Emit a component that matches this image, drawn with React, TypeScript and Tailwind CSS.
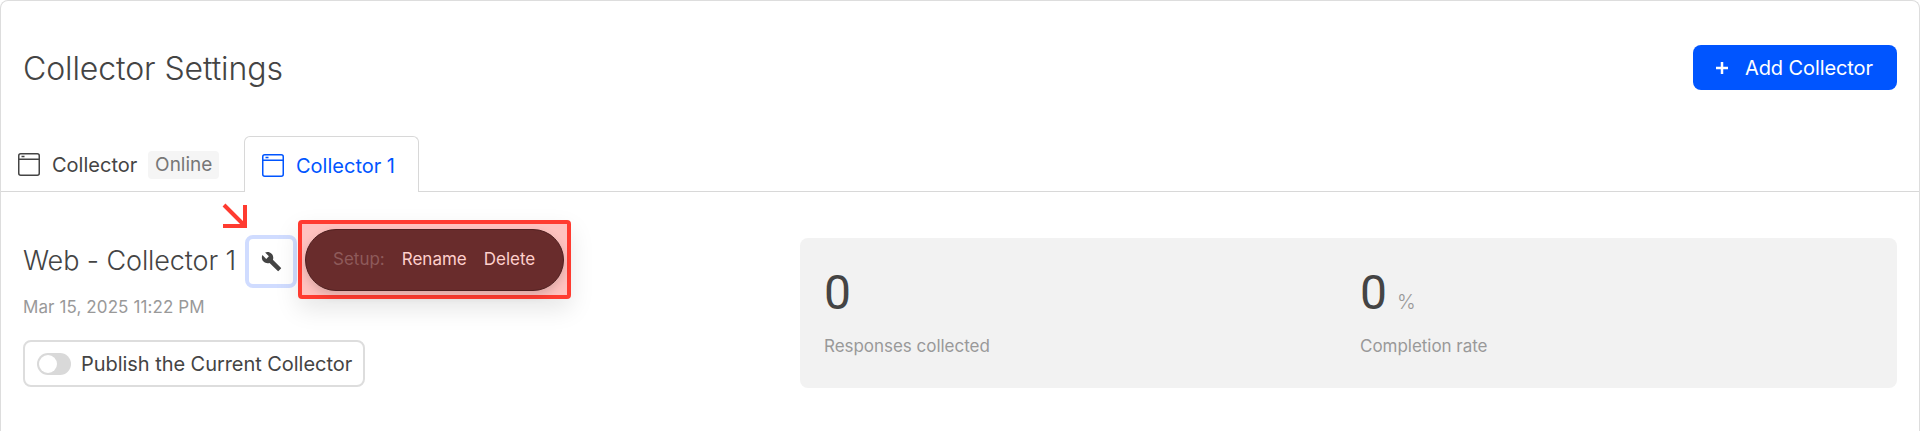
import { MdBuild } from 'react-icons/md'

function WindowIcon({ className }: { className: string }) {
  return (
    <svg className={className} viewBox="0 0 22 23" fill="none" stroke="currentColor">
      <rect x="0.75" y="0.75" width="20.5" height="21.5" rx="2" strokeWidth="1.5" />
      <path d="M1 6.25h20" strokeWidth="1.5" />
      <path d="M3.5 3.5h3" strokeWidth="1.5" />
    </svg>
  )
}

function Stat({ value, unit, label }: { value: string; unit?: string; label: string }) {
  return (
    <div className="w-[536px]">
      <div className="flex items-baseline h-[50px]">
        <span className="font-['Roboto',sans-serif] text-[48px] leading-[50px] text-[#444444]">{value}</span>
        {unit && <span className="ml-[10px] text-[20px] font-light text-[#999999]">{unit}</span>}
      </div>
      <div className="mt-[16px] text-[17px] tracking-[-0.03px] leading-[24px] text-[#999999]">{label}</div>
    </div>
  )
}

export default function App() {
  return (
    <div className="h-[431px] bg-white border border-b-0 border-[#dddddd] rounded-t-lg overflow-hidden font-['Inter',sans-serif]">
      {/* header */}
      <div className="flex items-center justify-between pt-[44px] pl-[22px] pr-[22px]">
        <h1 className="pt-[2px] text-[32px] tracking-[-0.1px] leading-[43px] font-light text-[#444444]">Collector Settings</h1>
        <button className="flex items-center h-[45px] w-[204px] rounded-lg bg-[#0055ff] pl-[22px] text-[20px] tracking-[-0.1px] text-white">
          <svg className="w-[14px] h-[14px] mr-[16px]" viewBox="0 0 14 14" stroke="currentColor" strokeWidth="2.5">
            <path d="M7 1v12M1 7h12" />
          </svg>
          Add Collector
        </button>
      </div>

      {/* tabs */}
      <div className="mt-[47px] flex items-end h-[55px] border-b border-[#d8d8d8] pl-[17px]">
        <div className="flex items-center h-[55px] w-[226px] pt-[2px]">
          <WindowIcon className="w-[22px] h-[23px] text-[#444444]" />
          <span className="ml-[12px] text-[20px] text-[#444444]">Collector</span>
          <span className="ml-[11px] h-[28px] w-[71px] rounded bg-[#f5f5f5] text-center text-[19px] leading-[28px] text-[#777777]">Online</span>
        </div>
        <div className="relative -mb-px flex items-center h-[56px] w-[175px] rounded-t-md border border-b-0 border-[#d8d8d8] bg-white pl-[17px] pt-[2px]">
          <WindowIcon className="w-[22px] h-[23px] text-[#0055ff]" />
          <span className="ml-[12px] text-[20px] text-[#0055ff]">Collector 1</span>
        </div>
      </div>

      {/* body */}
      <div className="flex pl-[22px] pr-[22px]">
        <div className="relative w-[777px]">
          <div className="flex items-center mt-[43px] h-[53px]">
            <span className="text-[27px] tracking-[-0.1px] font-light text-[#444444]">Web - Collector 1</span>
            <span className="ml-[9px] flex items-center justify-center w-[52px] h-[53px] rounded-lg border-4 border-[#d0dcff] bg-white text-[#444444]">
              <MdBuild className="w-[21px] h-[21px]" />
            </span>
          </div>
          <div className="mt-[7px] text-[17px] tracking-[0.1px] leading-[24px] text-[#999999]">Mar 15, 2025 11:22 PM</div>
          <div className="mt-[21px] flex items-center w-[342px] h-[47px] rounded-lg border-2 border-[#dddddd] pl-[12px]">
            <span className="flex items-center w-[34px] h-[22px] rounded-full bg-[#d9d9d9] pl-[2px]">
              <span className="w-[18px] h-[18px] rounded-full bg-white" />
            </span>
            <span className="ml-[10px] text-[20px] tracking-[-0.05px] text-[#444444]">Publish the Current Collector</span>
          </div>

          {/* annotation */}
          <svg className="absolute left-[199px] top-[11px] w-[25px] h-[25px]" viewBox="0 0 25 25" fill="none" stroke="#ff3b30" strokeWidth="4">
            <path d="M2 2l20 20M23 2v21H1" />
          </svg>
          <div className="absolute left-[275px] top-[28px] w-[273px] h-[79px] rounded border-4 border-[#ff3b30] bg-[#ffc2bf] shadow-[0_10px_24px_rgba(0,0,0,0.1)]">
            <div className="mt-[5px] ml-[3px] flex items-center h-[62px] w-[259px] rounded-full border border-[#4f2020] bg-[#692c2c] pl-[27px] text-[17px] shadow-[0_4px_10px_rgba(0,0,0,0.15)]">
              <span className="text-[#8e5a5a]">Setup:</span>
              <span className="ml-[17px] text-[#ffd0cc]">Rename</span>
              <span className="ml-[17px] text-[#ffd0cc]">Delete</span>
            </div>
          </div>
        </div>

        {/* stats */}
        <div className="flex mt-[46px] h-[150px] flex-1 rounded-lg bg-[#f2f2f2] pl-[24px] pt-[30px]">
          <Stat value="0" label="Responses collected" />
          <Stat value="0" unit="%" label="Completion rate" />
        </div>
      </div>
    </div>
  )
}
